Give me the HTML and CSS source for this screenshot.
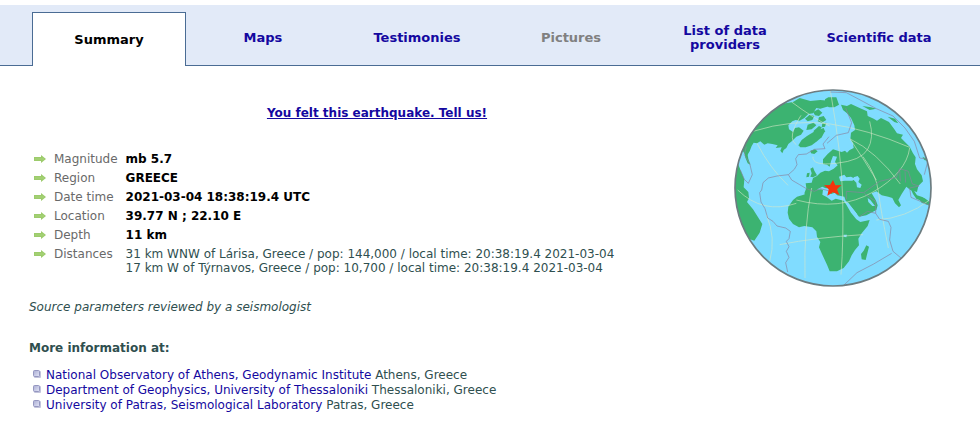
FILE: index.html
```html
<!DOCTYPE html>
<html lang="en">
<head>
    <meta charset="UTF-8">
    <meta name="viewport" content="width=device-width, initial-scale=1.0">
    <title>Earthquake - GREECE - mb 5.7</title>
    <link rel="stylesheet" href="styles.css">
</head>
<body>
    <!-- shared icons -->
    <svg class="defs" width="0" height="0" aria-hidden="true">
        <defs>
            <linearGradient id="bulletFill" x1="0" y1="0" x2="1" y2="1">
                <stop offset="0" stop-color="#a9acd2"/>
                <stop offset="1" stop-color="#e4e6f8"/>
            </linearGradient>
            <symbol id="arrow" viewBox="0 0 12 8">
                <path d="M0 2h7V0l5 4-5 4V6H0z" fill="#9ccb6b"/>
                <path d="M1 4h9" stroke="#a9d47d" stroke-width="1"/>
            </symbol>
            <symbol id="bullet" viewBox="0 0 8 8">
                <rect x="1" y="1" width="7" height="7" rx="1" fill="#c3c4dc"/>
                <rect x=".5" y=".5" width="6" height="6" rx="1" fill="url(#bulletFill)" stroke="#9597c0"/>
            </symbol>
        </defs>
    </svg>

    <nav class="tabs">
        <a class="tab active" href="#summary">Summary</a>
        <a class="tab" href="#maps">Maps</a>
        <a class="tab" href="#testimonies">Testimonies</a>
        <span class="tab disabled">Pictures</span>
        <a class="tab" href="#providers">List of data providers</a>
        <a class="tab" href="#scientific">Scientific data</a>
    </nav>

    <main class="content" id="summary">
        <div class="info">
            <p class="felt"><a href="#felt">You felt this earthquake. Tell us!</a></p>

            <table class="params">
                <tr>
                    <th scope="row"><svg class="arrow"><use href="#arrow"/></svg>Magnitude</th>
                    <td class="value">mb 5.7</td>
                </tr>
                <tr>
                    <th scope="row"><svg class="arrow"><use href="#arrow"/></svg>Region</th>
                    <td class="value">GREECE</td>
                </tr>
                <tr>
                    <th scope="row"><svg class="arrow"><use href="#arrow"/></svg>Date time</th>
                    <td class="value">2021-03-04 18:38:19.4 UTC</td>
                </tr>
                <tr>
                    <th scope="row"><svg class="arrow"><use href="#arrow"/></svg>Location</th>
                    <td class="value">39.77 N ; 22.10 E</td>
                </tr>
                <tr>
                    <th scope="row"><svg class="arrow"><use href="#arrow"/></svg>Depth</th>
                    <td class="value">11 km</td>
                </tr>
                <tr>
                    <th scope="row"><svg class="arrow"><use href="#arrow"/></svg>Distances</th>
                    <td>31 km WNW of Lárisa, Greece / pop: 144,000 / local time: 20:38:19.4 2021-03-04<br>17 km W of Týrnavos, Greece / pop: 10,700 / local time: 20:38:19.4 2021-03-04</td>
                </tr>
            </table>

            <p class="source">Source parameters reviewed by a seismologist</p>

            <h2 class="more">More information at:</h2>
            <ul class="links">
                <li><svg class="bullet"><use href="#bullet"/></svg><span><a href="#noa">National Observatory of Athens, Geodynamic Institute</a> Athens, Greece</span></li>
                <li><svg class="bullet"><use href="#bullet"/></svg><span><a href="#auth">Department of Geophysics, University of Thessaloniki</a> Thessaloniki, Greece</span></li>
                <li><svg class="bullet"><use href="#bullet"/></svg><span><a href="#upsl">University of Patras, Seismological Laboratory</a> Patras, Greece</span></li>
            </ul>
        </div>

        <svg class="globe" viewBox="0 0 600 600" role="img" aria-label="Globe with the epicentre in Greece">
            <clipPath id="disc"><circle cx="300" cy="300" r="294"/></clipPath>
            <g clip-path="url(#disc)">
                <rect class="sea" width="600" height="600"/>
                <g class="land">
                    <!-- North America -->
                    <path d="M130 50L180 42 200 30 232 39 262 36 286 38 300 42 282 56 262 62 250 60 240 76 226 78 214 90 200 98 188 96 178 100 166 112 168 124 180 132 186 120 198 118 212 128 204 140 190 146 178 158 166 168 160 180 152 186 148 196 142 188 146 178 128 180 134 172 118 168 104 166 94 170 82 160 72 166 62 164 56 174 50 190 40 206 30 190 30 100z"/>
                    <path d="M216 92l14-12 14 4-6 12-14 4zM240 72l16-8 12 10-10 10-12-2zM258 88l14-4 8 12-14 8-12-4zM224 110l18-6 8 8-14 12-16 2zM242 128l16-14 8 4-8 14-16 8zM268 106l12-2-4 12-10 2z"/>
                    <path d="M196 172L206 156 222 144 238 134 254 126 272 120 276 130 266 148 252 160 236 172 218 178 202 178z"/>
                    <path d="M36 176l6 14 4 22 6 18-8-4-8-20zM232 188l14-4 8 6-10 8-10-2z"/>
                    <!-- South America -->
                    <path d="M12 220L24 250 34 274 32 298 46 312 48 330 42 342 60 364 88 408 80 434 64 458 40 450 0 380z"/>
                    <!-- Arctic coast of the Pacific -->
                    <path d="M276 34l10-6 24 0 8 22-14 8-16 0-12-6z"/>
                    <!-- Eurasia -->
                    <path d="M324 50L342 54 354 48 380 60 402 70 404 84 422 92 432 98 444 90 468 102 484 124 492 136 510 140 504 150 518 164 530 176 540 196 548 208 546 228 552 244 566 262 570 280 556 294 552 312 532 306 520 296 506 318 496 336 504 352 498 358 486 346 478 330 466 326 446 322 430 310 416 316 428 336 434 352 430 366 400 382 378 386 364 368 338 338 334 326 312 322 306 314 294 318 288 304 276 300 268 296 256 302 246 312 236 324 218 322 214 316 220 300 218 286 236 284 240 270 252 264 262 254 276 248 288 250 302 242 314 232 306 222 312 206 300 204 294 220 290 236 282 230 270 228 270 214 284 198 300 184 314 188 326 192 336 188 342 194 350 186 362 180 360 166 352 154 354 134 366 126 364 112 354 90 342 76 330 66z"/>
                    <path d="M232 242l8-4 4 10 8 14-12 6-8-2 4-10zM222 256l8-2-2 12-8 2zM388 54l26 4 16 4-20 4zM464 86l22 6 10 14-12-4z"/>
                    <!-- Africa -->
                    <path d="M164 374L166 356 180 336 192 326 212 320 236 308 264 304 270 306 268 320 282 328 296 338 308 332 332 338 340 350 354 374 370 394 382 402 410 396 404 414 386 436 376 452 378 472 366 486 356 502 348 520 332 540 312 550 290 550 282 530 268 500 258 478 262 462 252 446 250 430 238 418 214 414 198 418 180 408 168 392z"/>
                    <path d="M400 472l8 4-10 40-12-2-2-16 8-10z"/>
                    <!-- South-east Asia and Japan -->
                    <path d="M532 300l12 10 8 12 18 6-2 12-18-8-10-14zM548 320l26 10 20 14-2 10-26-10zM568 206l14 6 4 8-12-4z"/>
                </g>
                <g class="sea">
                    <path d="M318 266l16-6 6 8 14-2 12 6-8 6-22 0-14 2zM362 268l12-4 6 8-4 10 10 8-4 10-10-2-2-14-8-8z"/>
                    <path d="M338 340l8 4 26 34 2 10-8-4zM404 330l8 6 14 18-8 0-12-12zM332 440l10 0-2 8-8-2zM276 302l22-4 4 14-18 4z"/>
                </g>
                <g class="grid">
                    <path d="M60 130Q180 92 292 108T530 178M72 166Q110 240 165 292M292 8Q326 200 329 328T324 560M176 42Q240 90 290 114M204 82Q160 150 190 170"/>
                    <path d="M352 154Q390 210 430 276M350 152Q430 190 502 288M410 100Q424 150 404 184T310 226 240 206M14 306Q90 380 190 346M236 300Q212 420 216 570M140 470Q250 448 390 440M190 336Q320 370 420 312T530 180M390 206Q430 260 436 310T466 480M100 380Q130 450 110 520M430 396Q520 390 590 336"/>
                </g>
                <g class="plates">
                    <path d="M288 146L270 168 276 182 244 184 220 198 196 200 188 212 192 230 184 244 166 260 132 264 106 270 90 284 86 306 80 314 84 342 96 362 104 390 120 400 132 414 158 420 172 430 168 452 160 460 168 476 160 490 168 508 158 524 164 552"/>
                    <path d="M166 260L176 276 200 290 220 302 244 310 262 302 286 308"/>
                    <path d="M40 176L34 200 50 226 58 260 46 286 34 274 22 246"/>
                    <path d="M282 166L310 142 346 134 356 104 338 60M292 12L340 14 378 34 430 62 480 84 516 120 544 160 560 210 586 214 574 260"/>
                    <path d="M394 316L410 328 428 340 428 376 440 394 466 400 474 418 470 456 480 490 504 510M330 594L372 554 422 528 476 496M428 376L404 370 380 386M340 334V310L392 314 440 280 490 268 500 242 526 250 538 288 558 294 530 300 534 328 562 340 590 352M500 244L502 280M516 250L518 284"/>
                </g>
                <path class="star" d="M300 276l7 16 18-1-13 13 7 17-19-8-17 10 4-19-14-12 18-1z"/>
            </g>
            <circle class="rim" cx="300" cy="300" r="294"/>
        </svg>
    </main>
</body>
</html>
```

FILE: styles.css
```css
body {
    margin: 0;
    background-color: #fff;
    color: #2f4f4f;
    font-family: Verdana, "DejaVu Sans", sans-serif;
    font-size: 12px;
    line-height: 14px;
}

a {
    color: #1408a0;
    text-decoration: none;
}

.defs {
    position: absolute;
}

/* Tabs */
.tabs {
    display: flex;
    margin-top: 5px;
    padding: 7px 24px 0 32px;
    background-color: #e2eaf8;
    box-shadow: inset 0 -1px #4a6c94;
}

.tab {
    flex: 1 1 0;
    display: flex;
    align-items: center;
    justify-content: center;
    box-sizing: border-box;
    min-height: 54px;
    padding: 0 24px 2px;
    text-align: center;
    font-size: 13px;
    font-weight: bold;
}

.tab.active {
    padding: 0 23px;
    border: 1px solid #4a6c94;
    border-bottom: none;
    background-color: #fff;
    color: #000;
}

.tab.disabled {
    color: #808080;
}

/* Summary */
.content {
    display: flex;
    align-items: flex-start;
}

.info {
    flex: 1;
    padding: 40px 0 0 29px;
}

.felt {
    margin: 0 0 32px;
    padding-right: 8px;
    text-align: center;
    font-size: 12px;
    font-weight: bold;
}

.felt a {
    text-decoration: underline;
}

.params {
    border-collapse: collapse;
}

.params th,
.params td {
    padding: 0 0 5px;
    vertical-align: top;
    text-align: left;
}

.params th {
    padding-left: 5px;
    padding-right: 8px;
    color: #696969;
    font-weight: normal;
    white-space: nowrap;
}

.params .value {
    color: #000;
    font-weight: bold;
}

.arrow {
    width: 12px;
    height: 8px;
    margin-right: 8px;
}

.source {
    margin: 20px 0 27px;
    font-style: italic;
}

.more {
    margin: 0 0 13px;
    font-size: 12px;
}

.links {
    margin: 0;
    padding: 0 0 0 4px;
    list-style: none;
}

.links li {
    display: flex;
    line-height: 15px;
}

.bullet {
    width: 8px;
    height: 8px;
    margin: 2px 5px 0 0;
}

/* Globe */
.globe {
    flex: none;
    width: 200px;
    height: 200px;
    margin: 22px 47px 0 0;
}

.land {
    fill: #3cb371;
}

.sea {
    fill: #80dcff;
}

.grid,
.plates,
.rim {
    fill: none;
}

.grid {
    stroke: #d5e8c8;
    stroke-width: 3;
    stroke-opacity: 0.6;
}

.plates {
    stroke: #8a83a0;
    stroke-width: 2;
    stroke-linejoin: round;
}

.rim {
    stroke: #6c7c80;
    stroke-width: 5;
}

.star {
    fill: #f5330b;
}
```
